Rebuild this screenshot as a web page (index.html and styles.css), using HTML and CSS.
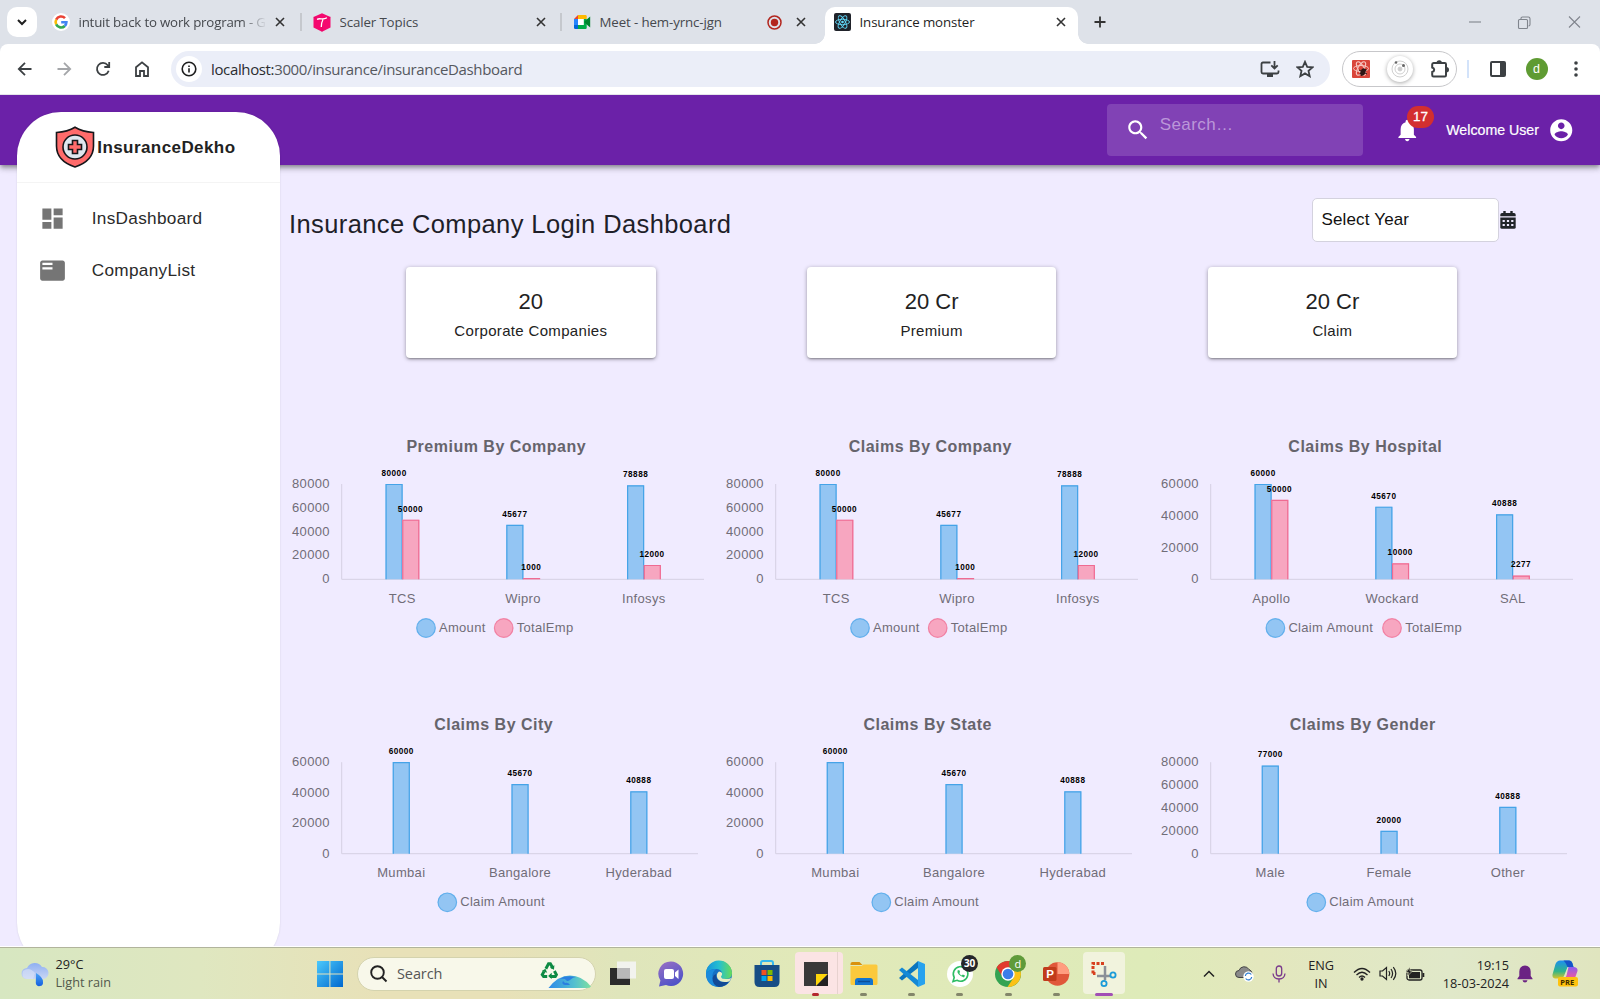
FILE: index.html
```html
<!DOCTYPE html>
<html lang="en">
<head>
<meta charset="utf-8">
<title>Insurance monster</title>
<link rel="stylesheet" href="styles.css">
</head>
<body>
<div class="tabstrip">
  <div class="tab-menu"><svg width="12" height="12" viewBox="0 0 12 12"><path d="M2 4l4 4 4-4" fill="none" stroke="#1f1f1f" stroke-width="2"/></svg></div>
  <div class="tab tab-google">
    <svg class="fav" width="18" height="18" viewBox="0 0 18 18"><circle cx="9" cy="9" r="9" fill="#fff"/><g fill="none" stroke-width="2.6"><path d="M13 5.2A5.4 5.4 0 0 0 4.2 6.6" stroke="#ea4335"/><path d="M4.2 6.6a5.4 5.4 0 0 0 0 4.8" stroke="#fbbc05"/><path d="M4.2 11.4a5.4 5.4 0 0 0 8.6 1.6" stroke="#34a853"/><path d="M12.8 13a5.4 5.4 0 0 0 1.6-3.7H9.2" stroke="#4285f4"/></g></svg>
    <span class="tab-text fade">intuit back to work program - G</span>
    <svg class="x" viewBox="0 0 10 10"><path d="M1 1l8 8M9 1l-8 8"/></svg>
  </div>
  <div class="tab tab-scaler">
    <svg class="fav" width="18" height="19" viewBox="0 0 18 19"><path d="M9 0.3L17.5 4v10.5L9 18.7.5 14.500V4z" fill="#f5086f"/><path d="M9 8.500V18.500M.8 4.200L9 8M17.300 4.200L9 8" stroke="#d8005d" stroke-width=".5"/><path d="M4 6.300C7.500 4.500 9 7.500 14 4.800M10 6.500Q8.500 9 8.300 14" fill="none" stroke="#fff" stroke-width="1.300"/></svg>
    <span class="tab-text">Scaler Topics</span>
    <svg class="x" viewBox="0 0 10 10"><path d="M1 1l8 8M9 1l-8 8"/></svg>
  </div>
  <div class="tab tab-meet">
    <svg class="fav" width="17" height="14" viewBox="0 0 17 14"><path d="M0 4h4v6H0z" fill="#2684fc"/><path d="M0 4l4-4v4z" fill="#ea4335"/><path d="M4 0h7.500q1.200 0 1.200 1.200V4H4z" fill="#ffba00"/><path d="M0 10h4v4H1.200Q0 14 0 12.800z" fill="#0066da"/><path d="M4 10h8.700v2.800q0 1.200-1.200 1.200H4z" fill="#00ac47"/><path d="M9.500 4h3.200v6H9.500z" fill="#00ac47"/><path d="M12.700 4.500L16.200 1.500V12.500L12.700 9.500 10 7z" fill="#00832d"/><path d="M4 4h5.700v6H4z" fill="#fff"/></svg>
    <span class="tab-text">Meet - hem-yrnc-jgn</span>
    <svg class="rec" width="15" height="15" viewBox="0 0 15 15"><circle cx="7.500" cy="7.500" r="6.500" fill="none" stroke="#b3261e" stroke-width="1.500"/><circle cx="7.500" cy="7.500" r="3.700" fill="#b3261e"/></svg>
    <svg class="x" viewBox="0 0 10 10"><path d="M1 1l8 8M9 1l-8 8"/></svg>
  </div>
  <div class="tab tab-active">
    <svg class="fav" width="17" height="18" viewBox="0 0 17 18"><rect width="17" height="18" rx="2" fill="#20232a"/><g fill="none" stroke="#61dafb" stroke-width=".9"><ellipse cx="8.500" cy="9" rx="7" ry="2.700"/><ellipse cx="8.500" cy="9" rx="7" ry="2.700" transform="rotate(60 8.500 9)"/><ellipse cx="8.500" cy="9" rx="7" ry="2.700" transform="rotate(120 8.500 9)"/></g><circle cx="8.500" cy="9" r="1.300" fill="#61dafb"/></svg>
    <span class="tab-text">Insurance monster</span>
    <svg class="x" viewBox="0 0 10 10"><path d="M1 1l8 8M9 1l-8 8"/></svg>
  </div>
  <svg class="plus" width="12" height="12" viewBox="0 0 12 12"><path d="M6 .5v11M.5 6h11" stroke="#333" stroke-width="1.800"/></svg>
  <svg class="win-controls" width="114" height="16" viewBox="0 0 114 16" fill="none" stroke="#80858d" stroke-width="1.100"><path d="M1 8h12"/><path d="M51.500 5.500h7q1 0 1 1v7q0 1-1 1h-7q-1 0-1-1v-7q0-1 1-1z"/><path d="M53 5V4.200Q53 3 54.500 3h5.800q1.700 0 1.700 1.700v5.800q0 1.300-1.500 1.500"/><path d="M101 2.500l11 11M112 2.500l-11 11"/></svg>
</div>

<div class="toolbar-wrap"><div class="toolbar">
  <svg class="nav" viewBox="0 0 16 16" stroke="#3c4043"><path d="M14.500 8H2M8 1.800L1.800 8 8 14.200"/></svg>
  <svg class="nav" viewBox="0 0 16 16" stroke="#a4a6a9"><path d="M1.500 8H14M8 1.800L14.200 8 8 14.200"/></svg>
  <svg class="nav" viewBox="0 0 16 16" stroke="#3c4043"><path d="M13.700 9.800A6 6 0 1 1 12.700 4.200L14 5.700M14.200 1v5H9.300"/></svg>
  <svg class="nav" viewBox="0 0 16 16" stroke="#3c4043"><path d="M2 6.200L8 1.300l6 4.900V15h-4v-5H6v5H2z"/></svg>
  <div class="omnibox">
    <div class="info"><svg width="16" height="16" viewBox="0 0 16 16"><circle cx="8" cy="8" r="6.800" fill="none" stroke="#1f1f1f" stroke-width="1.600"/><path d="M8 7.200v4.200M8 4.400v1.600" stroke="#1f1f1f" stroke-width="1.600"/></svg></div>
    <span class="url">localhost:<span class="path">3000/insurance/insuranceDashboard</span></span>
    <svg class="install" width="20" height="18" viewBox="0 0 20 18" fill="none" stroke="#3c4043" stroke-width="1.800"><path d="M10.500 2.500H3q-1.500 0-1.500 1.500v8Q1.500 13.500 3 13.500h14q1.500 0 1.500-1.500v-1.500"/><path d="M14.500 1v7M11.300 5.300l3.200 3.200 3.200-3.200"/><path d="M7 15.500h6" stroke-width="3"/></svg>
    <svg class="star" width="18" height="18" viewBox="0 0 18 18"><path d="M9 1.800l2.200 5 5.400.5-4.100 3.600 1.200 5.300L9 13.400l-4.700 2.800 1.200-5.300L1.400 7.300l5.400-.5z" fill="none" stroke="#3c4043" stroke-width="1.800"/></svg>
  </div>
  <div class="extensions">
    <svg width="18" height="18" viewBox="0 0 18 18"><rect width="18" height="18" rx="1" fill="#d9453a"/><g fill="none" stroke="#f7c6c0" stroke-width="1"><ellipse cx="9" cy="8.500" rx="7.500" ry="3"/><ellipse cx="9" cy="8.500" rx="7.500" ry="3" transform="rotate(60 9 8.500)"/><ellipse cx="9" cy="8.500" rx="7.500" ry="3" transform="rotate(120 9 8.500)"/></g><ellipse cx="11" cy="12" rx="2.500" ry="3.800" fill="#2d1414" transform="rotate(20 11 12)"/><path d="M7 10l8 4M7.500 14l7-4M9 16l5-7" stroke="#2d1414"/></svg>
    <div class="orbit"><svg width="18" height="18" viewBox="0 0 18 18" fill="none" stroke="#d0d0d0"><circle cx="9" cy="9" r="8"/><circle cx="9" cy="9" r="5"/><circle cx="9" cy="9" r="2" fill="#ccc"/><circle cx="5" cy="2.500" r="1.300" fill="#666" stroke="none"/><circle cx="12.500" cy="5.500" r="1.500" fill="#666" stroke="none"/></svg></div>
    <svg width="20" height="20" viewBox="0 0 20 20"><path d="M3.500 4h11.300q1.200 0 1.200 1.200v11.100q0 1.200-1.200 1.200H3.500Q2.200 17.500 2.200 16v-3q2-.5 2-2.200t-2-2.300V5.500Q2.200 4 3.500 4z" fill="none" stroke="#3c4043" stroke-width="2"/><path d="M6.500 4a2.700 2.700 0 0 1 5.400 0zM16.300 8a2.700 2.700 0 0 1 0 5.400z" fill="#3c4043"/></svg>
  </div>
  <div class="tb-divider"></div>
  <svg class="panel" width="16" height="16" viewBox="0 0 16 16"><rect x="1" y="1" width="14" height="14" rx="1" fill="none" stroke="#3c4043" stroke-width="2"/><path d="M10 1h5v14h-5z" fill="#3c4043"/></svg>
  <div class="profile">d</div>
  <svg class="dots" width="4" height="16" viewBox="0 0 4 16" fill="#3c4043"><circle cx="2" cy="2" r="1.800"/><circle cx="2" cy="8" r="1.800"/><circle cx="2" cy="14" r="1.800"/></svg>
</div></div>

<div class="page">
  <header class="appbar">
    <div class="search">
      <svg width="26" height="26" viewBox="0 0 24 24" fill="#fff"><path d="M15.500 14h-.79l-.28-.27C15.410 12.590 16 11.110 16 9.500 16 5.910 13.090 3 9.500 3S3 5.910 3 9.500 5.910 16 9.500 16c1.610 0 3.090-.59 4.230-1.570l.27.28v.79l5 4.990L20.490 19l-4.990-5zm-6 0C7.010 14 5 11.990 5 9.500S7.010 5 9.500 5 14 7.010 14 9.500 11.990 14 9.500 14z"/></svg>
      <span>Search…</span>
    </div>
    <div class="bell">
      <svg width="26.500" height="26.500" viewBox="0 0 24 24" fill="#fff"><path d="M12 22c1.100 0 2-.9 2-2h-4c0 1.100.89 2 2 2zm6-6v-5c0-3.070-1.640-5.640-4.500-6.320V4c0-.83-.67-1.500-1.500-1.500s-1.500.67-1.500 1.500v.68C7.630 5.360 6 7.920 6 11v5l-2 2v1h16v-1l-2-2z"/></svg>
      <span class="badge">17</span>
    </div>
    <span class="welcome">Welcome User</span>
    <svg class="account" width="26.500" height="26.500" viewBox="0 0 24 24" fill="#fff"><path d="M12 2C6.480 2 2 6.480 2 12s4.480 10 10 10 10-4.480 10-10S17.520 2 12 2zm0 3c1.660 0 3 1.340 3 3s-1.340 3-3 3-3-1.340-3-3 1.340-3 3-3zm0 14.200c-2.500 0-4.710-1.280-6-3.220.03-1.990 4-3.080 6-3.080 1.990 0 5.970 1.090 6 3.080-1.290 1.940-3.500 3.220-6 3.220z"/></svg>
  </header>

  <aside class="sidebar">
    <div class="brand">
      <svg width="40" height="42" viewBox="0 0 40 42"><path d="M20 1.200C14 4.800 8 6 1.500 6.500V20c0 11 8 17.500 18.500 21 10.500-3.500 18.500-10 18.500-21V6.500C32 6 26 4.800 20 1.200z" fill="#ff6b6b" stroke="#16161a" stroke-width="1.600"/><circle cx="20" cy="21" r="12" fill="#dfe7ef" stroke="#16161a" stroke-width="1.600"/><path d="M17.500 14.500h5v4h4v5h-4v4h-5v-4h-4v-5h4z" fill="#ff6b6b" stroke="#16161a" stroke-width="1.600"/></svg>
      <span>InsuranceDekho</span>
    </div>
    <div class="menu-item"><svg width="27" height="27" viewBox="0 0 24 24" fill="#757575"><path d="M3 13h8V3H3v10zm0 8h8v-6H3v6zm10 0h8V11h-8v10zm0-18v6h8V3h-8z"/></svg><span>InsDashboard</span></div>
    <div class="menu-item"><svg width="27" height="27" viewBox="0 0 24 24" fill="#757575"><path d="M21 3H3c-1.100 0-2 .9-2 2v14c0 1.100.9 2 2 2h18c1.100 0 2-.9 2-2V5c0-1.100-.9-2-2-2zm-9 8H3V9h9v2zm0-4H3V5h9v2z"/></svg><span>CompanyList</span></div>
  </aside>

  <main class="main">
    <div class="heading">
      <h1>Insurance Company Login Dashboard</h1>
      <div class="year">
        <div class="select">Select Year</div>
        <svg width="16" height="18" viewBox="0 0 16 18"><path d="M3.300 0h2.400v2h4.600V0h2.400v2H14q1.700 0 1.700 1.700V5.300H.3V3.700Q.3 2 2 2h1.300z" fill="#212529"/><path d="M.3 6.500h15.400v9.700q0 1.600-1.700 1.600H2q-1.700 0-1.700-1.600z" fill="#212529"/><path d="M2.600 9h2.200v2H2.600zM6.900 9h2.200v2H6.900zM11.200 9h2.200v2h-2.200zM2.600 13h2.200v2H2.600zM6.900 13h2.200v2H6.900zM11.200 13h2.200v2h-2.200z" fill="#f0ebff"/></svg>
      </div>
    </div>
    <div class="cards">
      <div class="card"><div class="num">20</div><div class="lbl">Corporate Companies</div></div>
      <div class="card"><div class="num">20 Cr</div><div class="lbl">Premium</div></div>
      <div class="card"><div class="num">20 Cr</div><div class="lbl">Claim</div></div>
    </div>
    <div class="charts" id="charts"></div>
  </main>
</div>

<footer class="taskbar">
  <div class="weather">
    <svg width="28" height="26" viewBox="0 0 28 26"><defs><linearGradient id="cl" x2="0" y2="1"><stop stop-color="#8fb0f2"/><stop offset="1" stop-color="#c9d6f4"/></linearGradient><linearGradient id="dr" x2="0" y2="1"><stop stop-color="#4aa3f5"/><stop offset="1" stop-color="#1560e0"/></linearGradient></defs><path d="M6 18a5.500 5.500 0 0 1 0-11A8.500 8.500 0 0 1 21 6a6 6 0 0 1 1 12z" fill="url(#cl)"/><path d="M2 10q6-5 12 2l-2 6H6q-6-1-4-8z" fill="#dbe3f7" opacity=".6"/><path d="M15 12q7 4 7 9a3.600 3.600 0 0 1-7.200 1z" fill="url(#dr)"/></svg>
    <div class="weather-text"><div>29°C</div><div class="sub">Light rain</div></div>
  </div>
  <svg class="start" width="26" height="26" viewBox="0 0 26 26"><defs><linearGradient id="win" x2="1" y2="1"><stop stop-color="#4cc9fb"/><stop offset="1" stop-color="#0068cf"/></linearGradient></defs><path d="M0 0h12.400v12.400H0zM13.400 0H26v12.400H13.400zM0 13.400h12.400V26H0zM13.400 13.400H26V26H13.400z" fill="url(#win)"/></svg>
  <div class="task-search">
    <svg width="18" height="18" viewBox="0 0 18 18" fill="none" stroke="#222" stroke-width="1.900"><circle cx="7.500" cy="7.500" r="6.300"/><path d="M12 12l4.500 4.500"/></svg>
    <span>Search</span>
    <svg class="earth" width="54" height="30" viewBox="0 0 54 30"><defs><linearGradient id="ea"><stop stop-color="#2f8be8"/><stop offset=".6" stop-color="#52bfd0"/><stop offset="1" stop-color="#7ee0a0"/></linearGradient></defs><g transform="translate(2 3) scale(.9)"><g fill="none" stroke="#0e8a43" stroke-width="3.300"><path d="M6.500 7.500l3-5.500h2l2.800 4.800"/><path d="M16 10l2.200 4-1.200 2h-6"/><path d="M4.500 10.500l-2 3.500L4 16h4"/></g><path d="M16 3.500l-.5 5-4.500-2zM13 12v7l-4-3.500zM2 10l4-2.500 2 4.500z" fill="#0e8a43"/></g><path d="M10.500 29Q20 16.500 32 16.500T53 27.500Q52 29 49 29z" fill="url(#ea)"/><path d="M22 20q5-1 6 1t4 0q3-3 6-3-6-1.500-12-.3zM25 22q-2 3 2 4h5q-2-3-5-2z" fill="#2b7fe0"/></svg>
  </div>
  <div class="apps">
    <div class="app"><svg width="28" height="28" viewBox="0 0 28 28"><path d="M1 8h20v17H1z" fill="#2b2b2b"/><path d="M8 1.500h19v17H8z" fill="#f4f4f4" opacity=".9"/><path d="M8 8h13v10.500H8z" fill="#b9b9b9"/></svg></div>
    <div class="app"><svg width="28" height="28" viewBox="0 0 28 28"><defs><linearGradient id="ch" x2=".5" y2="1"><stop stop-color="#9b72c4"/><stop offset="1" stop-color="#4f52c8"/></linearGradient></defs><path d="M14 1.500a12.300 12.300 0 1 1-5 23.600L2 26.500l1.400-6A12.300 12.300 0 0 1 14 1.500z" fill="url(#ch)"/><rect x="7" y="9" width="10" height="10" rx="2" fill="#fff"/><path d="M18 12.500l3.500-3v9.500L18 16z" fill="#fff"/></svg></div>
    <div class="app"><svg width="28" height="28" viewBox="0 0 28 28"><defs><linearGradient id="e1"><stop stop-color="#1593dc"/><stop offset=".5" stop-color="#25bfd0"/><stop offset="1" stop-color="#68dc58"/></linearGradient></defs><circle cx="14" cy="14" r="13" fill="#1570c4"/><path d="M1 14a13 13 0 0 1 26-1q0 6-7 6-4.500 0-4.500-2.500Q17 15 17 13q-1-4-6-4Q4 9 1 14z" fill="url(#e1)"/><path d="M1 14Q4 9 11 9q-4 3-3.500 8T14 26.800Q2 27 1 14z" fill="#1b8bdd"/><path d="M11 14q0 8 8 8 4 0 6-2-4 7-11 7-7-2-6.500-9 .5-3 3.500-4z" fill="#124a96"/><path d="M17 13q.5 2.500-1 3.500 0 2.500 4.500 2.500t5.500-1.500q0 2.500-2 4-8 2-11.500-3-2-4 1.500-7 2 0 3 1.500z" fill="#e7edc5"/></svg></div>
    <div class="app"><svg width="28" height="28" viewBox="0 0 28 28"><path d="M8 6V3q0-2 2-2h8q2 0 2 2v3" fill="none" stroke="#35b8ee" stroke-width="2"/><path d="M1.500 5h25v17q0 5-5 5h-15q-5 0-5-5z" fill="#174d85"/><path d="M8.500 10h5v5h-5z" fill="#f25022"/><path d="M14.500 10h5v5h-5z" fill="#7fba00"/><path d="M8.500 16h5v5h-5z" fill="#00a4ef"/><path d="M14.500 16h5v5h-5z" fill="#ffb900"/></svg></div>
    <div class="app sticky"><svg width="24" height="24" viewBox="0 0 24 24"><path d="M0 0h24v12L12 24H0z" fill="#393939"/><path d="M12 24V12h12z" fill="#ffd60a"/><path d="M24 12v12H12z" fill="#222"/></svg><i class="ind red"></i></div>
    <div class="app"><svg width="28" height="28" viewBox="0 0 28 28"><path d="M.5 4q0-2 2-2h7l3 3h-12z" fill="#d9920e"/><path d="M.5 6h11l2-1.500H26q1.500 0 1.500 1.500v17.500q0 1.500-1.500 1.500H2Q.5 25 .5 23.500z" fill="#fbc93d"/><path d="M5 25v-4q0-3 3-3h12q3 0 3 3v4z" fill="#1374cf"/><path d="M8 21.500h12" stroke="#0b4f9a" stroke-width="1.500"/></svg><i class="ind"></i></div>
    <div class="app"><svg width="28" height="28" viewBox="0 0 28 28"><path d="M20 1l7 3v20l-7 3z" fill="#27a2ee"/><path d="M20 1v7L4 20.500 1 18z" fill="#0b75be"/><path d="M20 27v-7L4 7.500 1 10z" fill="#1489d6"/></svg><i class="ind"></i></div>
    <div class="app"><svg width="28" height="28" viewBox="0 0 28 28"><circle cx="14" cy="14" r="13" fill="#fff"/><path d="M7 21.500l1.200-4A7.300 7.300 0 1 1 11 20.300z" fill="none" stroke="#2dbd63" stroke-width="1.600"/><path d="M11.500 10.500q-1 4 6.500 7l1-2-2.200-1-1 1q-1.500-.5-2.500-2.500l.8-1-.9-2z" fill="#2dbd63"/></svg><b class="pill dark">30</b><i class="ind"></i></div>
    <div class="app"><svg width="28" height="28" viewBox="0 0 28 28"><circle cx="14" cy="14" r="13" fill="#33a352"/><path d="M14 14L2.700 7.500A13 13 0 0 1 25.300 7.500H14z" fill="#e23a2e"/><path d="M14 8h11.500A13 13 0 0 1 13.500 27L20 17z" fill="#fbc116"/><path d="M2.700 7.500L8.500 17l5.500-9z" fill="#e23a2e"/><circle cx="14" cy="14" r="6.700" fill="#fff"/><circle cx="14" cy="14" r="5.300" fill="#3b7de9"/></svg><b class="pill green">d</b><i class="ind"></i></div>
    <div class="app"><svg width="28" height="28" viewBox="0 0 28 28"><circle cx="15.500" cy="14" r="11.800" fill="#e0573a"/><path d="M15.500 2.200A11.800 11.800 0 0 1 27.300 14H15.500z" fill="#ff9d7f"/><rect x="1" y="7" width="13.500" height="14" rx="1.500" fill="#c13b1b"/><text class="ppt" x="4.200" y="18">P</text></svg><i class="ind"></i></div>
    <div class="app snip"><svg width="26" height="26" viewBox="0 0 26 26"><path d="M2 12.500V2.500h12.500" fill="none" stroke="#d8401f" stroke-width="3" stroke-dasharray="3 1.500"/><path d="M4.500 12.500H2" stroke="#d8401f" stroke-width="3"/><path d="M14 5v14M6 15h14" stroke="#8b9097" stroke-width="2.500"/><circle cx="22" cy="14" r="2.600" fill="none" stroke="#1b9bd8" stroke-width="1.800"/><circle cx="13" cy="22.500" r="2.600" fill="none" stroke="#1b9bd8" stroke-width="1.800"/></svg><i class="ind purple"></i></div>
  </div>
  <div class="tray">
    <svg class="chev" width="12" height="8" viewBox="0 0 12 8"><path d="M1 6.500l5-5 5 5" fill="none" stroke="#222" stroke-width="1.500"/></svg>
    <svg class="cloud" width="19" height="17" viewBox="0 0 19 17"><path d="M4 12.500a3.500 3.500 0 0 1 0-7 5.500 5.500 0 0 1 10-1 4.500 4.500 0 0 1 1 8z" fill="#8a8a8a" stroke="#444"/><circle cx="13.500" cy="11.500" r="5.200" fill="#fff"/><path d="M10.300 11a3.300 3.300 0 0 1 6-1.500M16.700 12a3.300 3.300 0 0 1-6 1.500" fill="none" stroke="#2a7bd0" stroke-width="1.200"/></svg>
    <svg class="mic" width="14" height="18" viewBox="0 0 14 18" fill="none" stroke="#7a3a8c" stroke-width="1.300"><rect x="4.300" y="1" width="5.400" height="10" rx="2.700"/><path d="M1 8.500q.5 5.500 6 5.500t6-5.500M7 14v3.500"/></svg>
    <div class="lang">ENG<br>IN</div>
    <svg class="wifi" width="18" height="14" viewBox="0 0 18 14" fill="none" stroke="#222" stroke-width="1.300"><path d="M1 5.500q8-8 16 0M3.500 8q5.500-5.500 11 0M6 10.500q3-3 6 0"/><circle cx="9" cy="12" r="1" fill="#222"/></svg>
    <svg class="vol" width="18" height="15" viewBox="0 0 18 15" fill="none" stroke="#222" stroke-width="1.200"><path d="M1 5h2.500L7.500 1.500v12L3.500 10H1z"/><path d="M9.800 5q1.700 2.500 0 5M12 3q3.200 4.500 0 9M14.300 1.200q5 6.300 0 12.600"/></svg>
    <svg class="bat" width="19" height="14" viewBox="0 0 19 14"><rect x="1" y="3" width="15" height="10" rx="2" fill="none" stroke="#222" stroke-width="1.300"/><path d="M3 11.300V5H14v6.300z" fill="#222"/><path d="M16.500 6h1.800v4h-1.800z" fill="#222"/><path d="M4 0L0 5.500h2.300L1.500 9 6.500 4H4z" fill="#222" stroke="#e2e6c2" stroke-width=".6"/></svg>
    <div class="clock">19:15<br>18-03-2024</div>
    <svg class="tbell" width="16" height="18" viewBox="0 0 16 18" fill="#6b2383"><path d="M8 .5q5.500.3 5.700 6V11l1.800 2.500v.8H.5v-.8L2.300 11V6.500Q2.500.8 8 .5zM5.500 15.200h5Q10 17.500 8 17.500t-2.500-2.300z"/></svg>
    <svg class="copilot" width="27" height="27" viewBox="0 0 27 27"><defs><linearGradient id="c1" x2="0" y2="1"><stop stop-color="#1d8ef0"/><stop offset=".6" stop-color="#2fb58a"/><stop offset="1" stop-color="#d8c32a"/></linearGradient><linearGradient id="c2" x2="0" y2="1"><stop stop-color="#8b5cf0"/><stop offset="1" stop-color="#ee5aa0"/></linearGradient></defs><path d="M8 .5h9q2.500 0 3.500 3l1 3.500h-6l-3.500 9q-1 2.500-3.500 2.500H3q-3-.5-2.500-4l3-10.500Q5 .5 8 .5z" fill="url(#c1)"/><path d="M17 .5q2.500 0 3.500 3l1 3.500h-6q-2-5-4-6.500z" fill="#1554c8"/><path d="M16.500 7H22q4 .5 3.500 4l-2.500 7H12q2-.5 2.500-2.500z" fill="url(#c2)"/><rect x="6" y="17" width="20" height="9.500" rx="2" fill="#ffc20e"/><text class="pre" x="8.300" y="24.800">PRE</text></svg>
  </div>
</footer>
<script src="charts.js"></script>
</body>
</html>
```
FILE: styles.css
```css
* { box-sizing: border-box; }
body { margin: 0; width: 1600px; height: 999px; overflow: hidden; font-family: "Liberation Sans", Arial, sans-serif; background: #f0ebff; }
svg { display: block; flex: none; }

/* Browser tabs */
.tabstrip { height: 44px; background: #dee2e9; display: flex; align-items: center; font-family: "Open Sans", "Noto Sans", sans-serif; font-size: 13.300px; color: #45484d; }
.tab-menu { width: 30px; height: 30px; margin-left: 7px; border-radius: 10px; background: #fff; display: flex; align-items: center; justify-content: center; }
.tab { height: 44px; display: flex; align-items: center; white-space: nowrap; }
.tab-google { width: 265px; padding: 0 15px 0 15px; border-right: 2px solid #c5c8cd; height: 18px; }
.tab-scaler { width: 260px; padding: 0 14px 0 11px; border-right: 2px solid #c5c8cd; height: 18px; }
.tab-meet { width: 263px; padding: 0 19px 0 12px; }
.tab-active { position: relative; width: 253px; height: 37.500px; align-self: flex-end; padding: 0 12px 6px 9px; background: #fff; border-radius: 10px 10px 0 0; color: #1f1f1f; }
.tab-active::before, .tab-active::after { content: ""; position: absolute; bottom: 0; width: 10px; height: 10px; }
.tab-active::before { left: -10px; background: radial-gradient(circle at 0 0, transparent 9.500px, #fff 10px); }
.tab-active::after { right: -10px; background: radial-gradient(circle at 100% 0, transparent 9.500px, #fff 10px); }
.tab-text { margin-left: 8.500px; flex: 1; overflow: hidden; letter-spacing: -.12px; }
.fade { letter-spacing: -.2px; -webkit-mask-image: linear-gradient(90deg, #000 162px, transparent 188px); mask-image: linear-gradient(90deg, #000 162px, transparent 188px); }
.x { width: 10px; height: 10px; fill: none; stroke: #333; stroke-width: 1.600; }
.rec { margin-right: 14px; }
.plus { margin-left: 16px; }
.win-controls { margin-left: auto; margin-right: 18px; }

/* Browser toolbar */
.toolbar-wrap { background: #dee2e9; }
.toolbar { height: 51px; border-radius: 8px 8px 0 0; background: #fff; border-bottom: 1px solid #e4e4ea; display: flex; align-items: center; padding-left: 16.500px; }
.nav { width: 16px; height: 16px; fill: none; stroke-width: 1.800; margin-right: 23px; }
.omnibox { width: 1159px; height: 36px; margin-left: -2px; border-radius: 18px; background: #ebeef8; display: flex; align-items: center; padding-left: 5px; }
.info { width: 26px; height: 26px; border-radius: 50%; background: #fff; display: flex; align-items: center; justify-content: center; }
.url { margin-left: 9.500px; flex: 1; font: 15px "Open Sans", "Noto Sans", sans-serif; letter-spacing: -.36px; color: #2a2c30; }
.path { color: #55585e; }
.star { margin: 0 16px 0 16px; }
.extensions { width: 115px; height: 36.500px; margin-left: 12px; border: 1px solid #c7c7ca; border-radius: 19px; display: flex; align-items: center; justify-content: space-between; padding: 0 6px 0 9px; }
.orbit { width: 26px; height: 26px; border-radius: 50%; background: #fff; box-shadow: 0 1px 4px rgba(0,0,0,.35); display: flex; align-items: center; justify-content: center; }
.tb-divider { width: 2px; height: 18px; margin-left: 10.500px; background: #d3e3fa; }
.panel { margin-left: 20.500px; }
.profile { width: 22px; height: 22px; margin-left: 20px; border-radius: 50%; background: #5f9b33; color: #fff; font-size: 12.500px; line-height: 22px; text-align: center; }
.dots { margin-left: 26.500px; }

/* Application shell */
.page { position: relative; height: 851px; overflow: hidden; background: #f0ebff; }
.appbar { position: relative; height: 70px; background: #6b21a8; display: flex; align-items: center; justify-content: flex-end; padding-right: 25.500px; color: #fff; box-shadow: 0 2px 4px -1px rgba(0,0,0,.3), 0 4px 5px rgba(0,0,0,.18), 0 1px 10px rgba(0,0,0,.12); }
.search { width: 256px; height: 52.500px; border-radius: 4px; background: rgba(255,255,255,.15); display: flex; align-items: center; padding-left: 17.500px; }
.search span { margin: -10px 0 0 9px; font-size: 17px; letter-spacing: .4px; color: #bb97d9; }
.bell { position: relative; margin-left: 30.500px; }
.badge { position: absolute; left: 13.300px; top: -11px; width: 27px; height: 22px; border-radius: 11px; background: #d32f2f; font-size: 13.500px; line-height: 22px; text-align: center; -webkit-text-stroke: .3px #fff; }
.welcome { margin: 0 9px 0 26px; font-size: 14.200px; -webkit-text-stroke: .2px #fff; }

.sidebar { position: absolute; left: 17.300px; top: 17.300px; width: 262.700px; height: 855px; border-radius: 44px; background: #fff; box-shadow: 0 0 2px rgba(0,0,0,.12); }
.brand { height: 71px; border-bottom: 1px solid #f4f4f4; display: flex; align-items: center; padding-left: 37.500px; font-size: 17px; font-weight: bold; letter-spacing: .42px; color: #222; }
.brand span { margin: 1.500px 0 0 2.500px; }
.menu-item { height: 52.500px; display: flex; align-items: center; padding-left: 21.500px; font-size: 17.200px; letter-spacing: .3px; color: #2a2a2a; }
.menu-item span { margin-left: 26px; }
.brand + .menu-item { margin-top: 8.500px; }

.main { margin-left: 289px; padding-top: 32.300px; }
.heading { height: 44px; display: flex; justify-content: space-between; align-items: center; padding-right: 84.500px; }
h1 { margin: 10px 0 0; font-size: 25.500px; line-height: 30px; font-weight: normal; letter-spacing: .39px; color: #1f1f29; white-space: nowrap; }
.year { display: flex; align-items: center; gap: 1px; margin-top: 1px; }
.select { width: 186.500px; height: 44px; padding-left: 8.500px; border: 1px solid #d4d2de; border-radius: 5px; background: #fff; font-size: 17px; line-height: 42px; letter-spacing: .15px; color: #111; }
.cards { display: flex; gap: 151.100px; margin: 25.500px 0 0 117px; }
.card { width: 249.700px; height: 91.700px; padding-top: 20.400px; border-radius: 4px; background: #fff; box-shadow: 0 2px 2px -1px rgba(0,0,0,.25), 0 1px 4px rgba(0,0,0,.35); text-align: center; color: #222; }
.num { font-size: 22px; line-height: 30px; }
.lbl { margin-top: 1.400px; font-size: 15px; line-height: 24px; letter-spacing: .33px; }

/* Charts */
.charts { display: grid; grid-template-columns: repeat(3, 434.300px); grid-template-rows: 274px 230px; margin: 61.500px 0 0 -6px; }
.chart { width: 434px; height: 230px; overflow: visible; }
.chart text { font-size: 13px; letter-spacing: .32px; fill: #706d78; }
.chart .title { font-size: 16px; font-weight: bold; letter-spacing: .5px; fill: #66646c; text-anchor: middle; }
.chart .cat { text-anchor: middle; }
.chart .tick { text-anchor: end; }
.chart .val { font-size: 8.200px; font-weight: bold; letter-spacing: .5px; fill: #000; text-anchor: middle; }
.axis { stroke: #d5d0e3; fill: none; }
.amount { fill: #93c5f3; }
.total { fill: #f7a6c0; }
.amount-line { fill: none; stroke: #45a3e8; stroke-width: 1.200; }
.total-line { fill: none; stroke: #ef6b92; stroke-width: 1.200; }

/* Windows taskbar */
.taskbar { height: 53px; border-top: 1px solid #fff; display: flex; align-items: center; background: linear-gradient(90deg, #d7e7c1 0, #dfe7c0 200px, #e8e1b8 380px, #e8e1b8 500px, #dfe5bb 620px, #e1e9b9 800px, #deebb9 1150px, #e3e7bd 1260px, #e0e8c9 1450px, #e0e5bf 1600px); box-shadow: inset 0 1px #b1b49c; font-family: "Open Sans", "Noto Sans", sans-serif; font-size: 12.700px; color: #222; padding-top: 1px; }
.weather { width: 296px; padding-left: 20.500px; display: flex; align-items: center; }
.weather-text { margin: -2px 0 0 7px; line-height: 18px; }
.sub { color: #53594c; }
.start { margin-left: 20.500px; }
.task-search { width: 239px; height: 34px; margin-left: 14.500px; padding-left: 12px; border-radius: 17px; border: 1px solid #d4d3ae; background: #f8f8ea; display: flex; align-items: center; font-size: 14.500px; color: #555; }
.task-search span { margin-left: 9px; flex: 1; letter-spacing: -.1px; }
.earth { margin-right: 3px; }
.apps { display: flex; margin-left: 3px; isolation: isolate; }
.app { position: relative; width: 48.150px; height: 44px; display: flex; align-items: center; justify-content: center; }
.sticky::before, .snip::before { content: ""; position: absolute; z-index: -1; left: 3px; top: 0; width: 42px; height: 42px; border-radius: 4px; background: #fbe4e4; }
.sticky::before { border-right: 5px solid #fbe4e4; box-shadow: inset -1px 0 #e7d2cf; width: 43px; }
.snip::before { background: #f1f3dd; }
.ind { position: absolute; bottom: 0; left: 20.500px; width: 7px; height: 3px; border-radius: 2px; background: #83866a; }
.red { background: #b3282d; }
.purple { left: 15px; width: 18px; background: #a24fb5; }
.pill { position: absolute; right: 6px; top: 3px; width: 17px; height: 17px; border-radius: 50%; color: #fff; font-size: 10px; line-height: 17px; text-align: center; }
.dark { background: #25262b; }
.green { background: #5f9b3a; font-weight: normal; font-size: 11px; }
.ppt { font: bold 11.500px "Liberation Sans", sans-serif; fill: #fff; }
.tray { display: flex; align-items: center; flex: 1; line-height: 18px; }
.chev { margin-left: 74px; }
.cloud { margin-left: 20px; }
.mic { margin-left: 18.500px; }
.lang { width: 40px; margin-left: 15px; text-align: center; }
.wifi { margin-left: 12px; }
.vol { margin-left: 8px; }
.bat { margin-left: 8.500px; }
.clock { width: 74px; margin-left: 10.500px; text-align: right; white-space: nowrap; }
.tbell { margin-left: 8px; }
.copilot { margin-left: 19px; }
.pre { font: bold 7.500px "Open Sans", sans-serif; fill: #3b2c00; }
```
FILE: charts.js
```javascript
// Grouped bar charts. Coordinates are local to each chart's SVG.
const rows = [
  { titleX: 213.3, titleY: 31.7, top: 64, base: 159.3, right: 421, catY: 182.7, legendY: 208, legendTextY: 212 },
  { titleX: 210.7, titleY: 36, top: 68.2, base: 159.7, right: 415, catY: 183.3, legendY: 208.3, legendTextY: 212 }
];
const AXIS = 58.7, BAR = 17;
const company = { cats: ["TCS", "Wipro", "Infosys"], max: 80000, a: [80000, 45677, 78888], b: [50000, 1000, 12000], legend: [[143, "Amount", 155.9], [220.7, "TotalEmp", 233.7]] };
const single = [[164.3, "Claim Amount", 177.2]];
const region = { cats: ["Mumbai", "Bangalore", "Hyderabad"], max: 60000, a: [60000, 45670, 40888], legend: single };
const charts = [
  { row: 0, title: "Premium By Company", ...company },
  { row: 0, title: "Claims By Company", ...company },
  { row: 0, title: "Claims By Hospital", cats: ["Apollo", "Wockard", "SAL"], max: 60000, a: [60000, 45670, 40888], b: [50000, 10000, 2277], legend: [[123.4, "Claim Amount", 136.4], [240, "TotalEmp", 253.2]] },
  { row: 1, title: "Claims By City", ...region },
  { row: 1, title: "Claims By State", ...region },
  { row: 1, title: "Claims By Gender", cats: ["Male", "Female", "Other"], max: 80000, a: [77000, 20000, 40888], legend: single }
];

function bar(x, value, c, r, kind) {
  const y = r.base - (r.base - r.top) * value / c.max;
  return `<rect class="${kind}" x="${x}" y="${y}" width="${BAR}" height="${r.base - y}"/>` +
    `<path class="${kind}-line" d="M${x + .5} ${r.base}V${y + .5}H${x + BAR - .5}V${r.base}"/>`;
}
function label(x, value, c, r) {
  const y = r.base - (r.base - r.top) * value / c.max;
  return `<text class="val" x="${x + BAR / 2}" y="${y - 8.2}">${value}</text>`;
}
function draw(c) {
  const r = rows[c.row];
  let out = `<text class="title" x="${r.titleX}" y="${r.titleY}">${c.title}</text>`;
  for (let v = 0; v <= c.max; v += 20000) {
    const y = r.base - (r.base - r.top) * v / c.max;
    out += `<text class="tick" x="46.8" y="${y + 4}">${v}</text>`;
  }
  out += `<path class="axis" d="M${AXIS} ${r.top}V${r.base}H${r.right}"/>`;
  const step = (r.right - AXIS) / 3;
  let labels = "";
  c.cats.forEach((name, i) => {
    const mid = AXIS + step * (i + .5) + .2;
    const x = c.b ? mid - BAR + .3 : mid - BAR / 2;
    out += bar(x, c.a[i], c, r, "amount");
    labels += label(x, c.a[i], c, r);
    if (c.b) {
      out += bar(mid, c.b[i], c, r, "total");
      labels += label(mid - .3, c.b[i], c, r);
    }
    out += `<text class="cat" x="${mid}" y="${r.catY}">${name}</text>`;
  });
  c.legend.forEach(([cx, name, tx], i) => {
    const kind = i ? "total" : "amount";
    out += `<circle class="${kind}" cx="${cx}" cy="${r.legendY}" r="9.5"/><circle class="${kind}-line" cx="${cx}" cy="${r.legendY}" r="9.3" opacity=".7"/>`;
    out += `<text x="${tx}" y="${r.legendTextY}">${name}</text>`;
  });
  return `<svg class="chart" viewBox="0 0 434 230">${out}${labels}</svg>`;
}
document.getElementById("charts").innerHTML = charts.map(draw).join("");
```
